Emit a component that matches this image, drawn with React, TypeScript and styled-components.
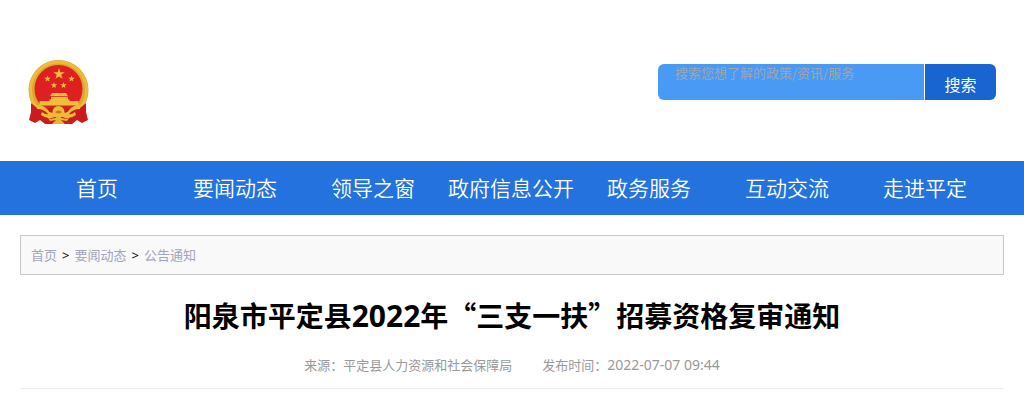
import React from "react";
import styled, { createGlobalStyle } from "styled-components";

const GlobalStyle = createGlobalStyle`
  * { box-sizing: border-box; }
  body {
    margin: 0;
    background: #fff;
    color: #000;
    font-family: "Noto Sans CJK SC", "Noto Sans", sans-serif;
    font-size: 13px;
    line-height: 20px;
  }
  a { text-decoration: none; }
`;

const Header = styled.header`
  display: flex;
  justify-content: space-between;
  align-items: flex-start;
  padding: 60px 28px 36px;
`;

const Emblem = styled.svg`
  display: block;
  width: 61px;
  height: 65px;
`;

const SearchForm = styled.form`
  display: flex;
  gap: 1px;
  height: 36px;
  margin-top: 4px;
`;

const SearchInput = styled.input`
  width: 266px;
  padding: 0 17px 18px;
  border: 0;
  border-radius: 6px 0 0 6px;
  outline: 0;
  background: #489af4;
  color: #fff;
  font: inherit;
  &::placeholder {
    color: #a2a6ac;
    opacity: 1;
  }
`;

const SearchButton = styled.button`
  width: 71px;
  padding: 4px 0 0;
  border: 0;
  border-radius: 0 6px 6px 0;
  background: #1864d0;
  color: #fff;
  font: inherit;
  font-size: 16px;
  cursor: pointer;
`;

const Nav = styled.nav`
  display: flex;
  padding: 0 30px 2px 28px;
  background: #2472de;
`;

const NavLink = styled.a`
  flex: 1 1 0;
  color: #fff;
  font-size: 21px;
  font-weight: 350;
  line-height: 52px;
  text-align: center;
  white-space: nowrap;
`;

const Main = styled.main`
  padding: 20px;
`;

const Breadcrumb = styled.nav`
  display: flex;
  gap: 5px;
  padding: 9px 10px;
  border: 1px solid #c8c8c8;
  background: #f9f9f9;
`;

const Crumb = styled.a`
  color: #a3a3bb;
`;

const Separator = styled.span`
  font-family: "Noto Sans", sans-serif;
`;

const Title = styled.h1`
  margin: 20px 0 19px;
  font-size: 28px;
  font-weight: 700;
  line-height: 40px;
  text-align: center;
`;

const TitleNumber = styled.span`
  font-family: "Noto Sans", sans-serif;
  font-size: 30px;
`;

const Meta = styled.div`
  display: flex;
  justify-content: center;
  gap: 30px;
  padding-bottom: 13px;
  border-bottom: 1px solid #ececec;
  color: #999;
`;

const MetaItem = styled.span`
  display: flex;
`;

const PublishTime = styled.time`
  font-family: "Noto Sans", sans-serif;
  font-size: 14px;
`;

const navItems = ["首页", "要闻动态", "领导之窗", "政府信息公开", "政务服务", "互动交流", "走进平定"];
const crumbs = ["首页", "要闻动态", "公告通知"];

const STAR = "M0 -10 2.4 -3.1 9.5 -3.1 3.8 1.2 5.9 8.1 0 4 -5.9 8.1 -3.8 1.2 -9.5 -3.1 -2.4 -3.1Z";

function NationalEmblem() {
  return (
    <Emblem viewBox="0 0 61 65" role="img" aria-label="国徽">
      <circle cx="30.5" cy="30" r="30" fill="#dda52a" />
      <circle cx="30.5" cy="30" r="28" fill="none" stroke="#eabd3c" strokeWidth="3" />
      <circle cx="30.5" cy="29" r="24" fill="#de2022" />
      <g fill="#f2bd38">
        <path d={STAR} transform="translate(31 14) scale(.6)" />
        <path d={STAR} transform="translate(19.5 18.8) scale(.34)" />
        <path d={STAR} transform="translate(43.5 18.8) scale(.34)" />
        <path d={STAR} transform="translate(26 25.3) scale(.34)" />
        <path d={STAR} transform="translate(35.5 25.3) scale(.34)" />
        <path d="M24 33H38L40 36H22Z" />
        <path d="M23 36.7H40V39.5H41.5V41H50.5V45.5H11.5V41H21.5V39.5H23Z" />
      </g>
      <path d="M3 43 9 48H52L58 43 58 52 60 60 54 63 49 60 44 64H17L12 60 7 63 1 60 3 52Z" fill="#cc1b1e" />
      <path d="M9 45Q16 45 20 50Q22 54 26 52L28 56Q21 61 13 55L14 52Q18 55 20 54Q16 49 9 49ZM52 45Q45 45 41 50Q39 54 35 52L33 56Q40 61 48 55L47 52Q43 55 41 54Q45 49 52 49Z" fill="#edbb37" />
      <circle cx="30.5" cy="52" r="6" fill="#edbb37" />
      <path d="M27 52Q30.5 49 34 52Q30.5 55 27 52Z" fill="#c9771f" />
      <path d="M20 58Q26 60 30.5 56Q35 60 41 58L39 61 33 60 37 64H24L28 60 22 61Z" fill="#e9b632" />
    </Emblem>
  );
}

export default function App() {
  return (
    <div lang="zh-CN">
      <GlobalStyle />
      <Header>
        <NationalEmblem />
        <SearchForm role="search" onSubmit={(e) => e.preventDefault()}>
          <SearchInput type="text" aria-label="搜索" placeholder="搜索您想了解的政策/资讯/服务" />
          <SearchButton type="submit">搜索</SearchButton>
        </SearchForm>
      </Header>
      <Nav>
        {navItems.map((item) => (
          <NavLink key={item} href="#">{item}</NavLink>
        ))}
      </Nav>
      <Main>
        <Breadcrumb>
          {crumbs.map((item, i) => (
            <React.Fragment key={item}>
              {i > 0 && <Separator>&gt;</Separator>}
              <Crumb href="#">{item}</Crumb>
            </React.Fragment>
          ))}
        </Breadcrumb>
        <Title>
          阳泉市平定县<TitleNumber>2022</TitleNumber>年“三支一扶”招募资格复审通知
        </Title>
        <Meta>
          <MetaItem>来源：平定县人力资源和社会保障局</MetaItem>
          <MetaItem>发布时间：<PublishTime>2022-07-07 09:44</PublishTime></MetaItem>
        </Meta>
      </Main>
    </div>
  );
}
